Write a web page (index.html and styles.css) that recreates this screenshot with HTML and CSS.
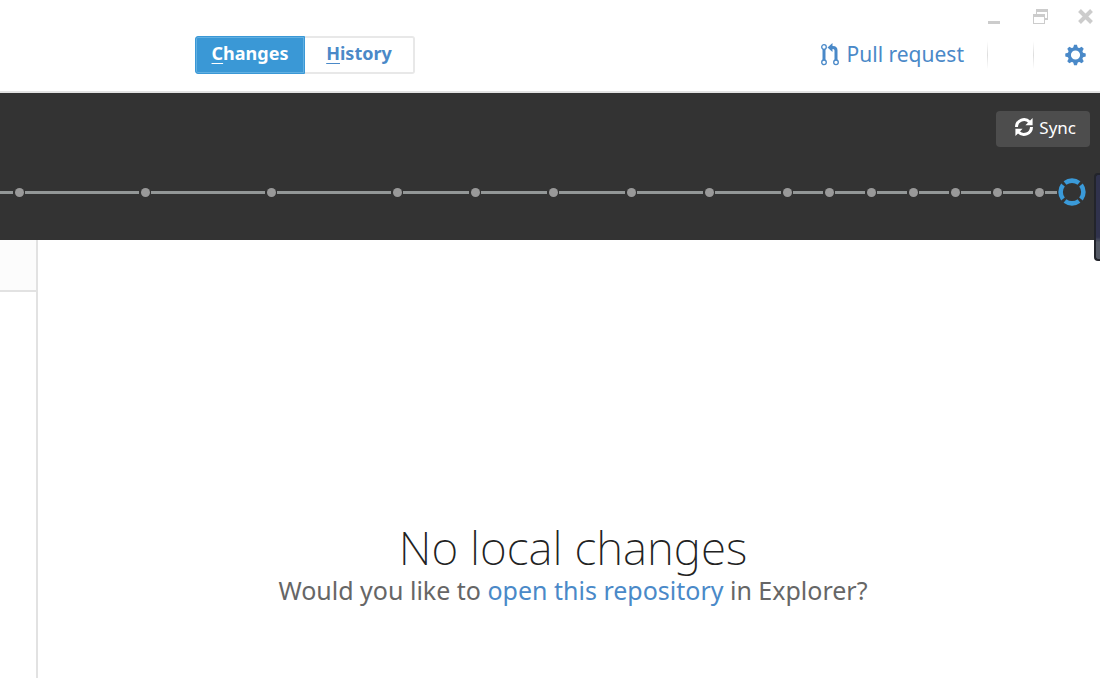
FILE: index.html
```html
<!DOCTYPE html>
<html lang="en">
<head>
    <meta charset="UTF-8">
    <meta name="viewport" content="width=device-width, initial-scale=1.0">
    <title>Changes</title>
    <link rel="stylesheet" href="styles.css">
</head>
<body>
    <header class="header">
        <div class="window-controls">
            <button class="window-button" aria-label="Minimize">
                <svg width="15" height="15" viewBox="0 0 15 15"><path d="M0 12h12v3H0z" fill="#ccc"/></svg>
            </button>
            <button class="window-button" aria-label="Restore">
                <svg width="15" height="15" viewBox="0 0 15 15" fill="#ccc"><path d="M3 0h12v11h-3V9h2V3H4v2H3zM0 5h12v10H0zM1 8v6h10V8z" fill-rule="evenodd"/></svg>
            </button>
            <button class="window-button" aria-label="Close">
                <svg width="15" height="15" viewBox="0 0 15 15"><path d="M1.5 1.5l12 12M13.5 1.5l-12 12" stroke="#ccc" stroke-width="4"/></svg>
            </button>
        </div>
        <div class="toolbar">
            <nav class="tabs">
                <button class="tab active"><span class="key">C</span>hanges</button>
                <button class="tab"><span class="key">H</span>istory</button>
            </nav>
            <a class="pull-request" href="#">
                <svg width="18" height="23" viewBox="0 0 18 23" fill="none" stroke="#4a89c8">
                    <path d="M3 6v11" stroke-width="3"/>
                    <path d="M10 4.5h2q3 0 3 3V17" stroke-width="3"/>
                    <path d="M6.5 4.5L11.5 0v9z" fill="#4a89c8" stroke="none"/>
                    <circle cx="3" cy="4" r="2.3" stroke-width="1.3" fill="#fff"/>
                    <circle cx="3" cy="19.3" r="2.3" stroke-width="1.3" fill="#fff"/>
                    <circle cx="15" cy="19.3" r="2.3" stroke-width="1.3" fill="#fff"/>
                </svg>
                Pull request
            </a>
            <span class="divider"></span>
            <span class="divider wide"></span>
            <button class="settings" aria-label="Settings">
                <svg width="21" height="22" viewBox="-11 -11 22 22" fill="#4a89c8">
                    <circle r="6.5" fill="none" stroke="#4a89c8" stroke-width="3.4"/>
                    <g id="teeth">
                        <path d="M-2.6-7L-1.5-10.7h3L2.6-7zM-2.6 7L-1.5 10.7h3L2.6 7zM-7-2.6L-10.7-1.5v3L-7 2.6zM7-2.6L10.7-1.5v3L7 2.6z"/>
                    </g>
                    <use href="#teeth" transform="rotate(45)"/>
                </svg>
            </button>
        </div>
    </header>

    <section class="timeline">
        <button class="sync">
            <svg width="20" height="20" viewBox="0 0 20 20" fill="none" stroke="#fff" stroke-width="3">
                <path d="M2.5 10a7.5 7.5 0 0 1 13-5"/>
                <path d="M17.5 10a7.5 7.5 0 0 1-13 5"/>
                <path d="M18.6 1v7.2h-7.2zM1.4 19v-7.2h7.2z" fill="#fff" stroke="none"/>
            </svg>
            Sync
        </button>
        <ol class="commits">
            <li class="commit first"></li>
            <li class="commit long"></li>
            <li class="commit long"></li>
            <li class="commit long"></li>
            <li class="commit medium"></li>
            <li class="commit medium"></li>
            <li class="commit medium"></li>
            <li class="commit medium"></li>
            <li class="commit medium"></li>
            <li class="commit"></li>
            <li class="commit"></li>
            <li class="commit"></li>
            <li class="commit"></li>
            <li class="commit"></li>
            <li class="commit"></li>
            <li class="current">
                <svg width="28" height="28" viewBox="-14 -14 28 28" fill="none" stroke="#3a9ad9" stroke-width="4.6">
                    <path id="arc" d="M-7-9A11.4 11.4 0 0 1 7-9"/>
                    <use href="#arc" transform="rotate(90)"/>
                    <use href="#arc" transform="rotate(180)"/>
                    <use href="#arc" transform="rotate(270)"/>
                </svg>
            </li>
        </ol>
        <div class="edge-panel"></div>
    </section>

    <div class="workspace">
        <aside class="sidebar">
            <div class="sidebar-header"></div>
        </aside>
        <main class="empty">
            <h1>No local changes</h1>
            <p>Would you like to <a href="#">open this repository</a> in Explorer?</p>
        </main>
    </div>
</body>
</html>
```
FILE: styles.css
```css
* {
    box-sizing: border-box;
}

body {
    font-family: "Noto Sans", "Open Sans", sans-serif;
    margin: 0;
    min-height: 100vh;
    display: flex;
    flex-direction: column;
    background-color: #fff;
    overflow-x: hidden;
}

button {
    font-family: inherit;
    border: none;
    padding: 0;
    background: none;
    cursor: pointer;
}

a {
    color: #4a89c8;
    text-decoration: none;
}

svg {
    display: block;
    flex-shrink: 0;
}

/* header */
.header {
    border-bottom: 2px solid #e2e2e2;
    padding-bottom: 17px;
}

.window-controls {
    display: flex;
    justify-content: flex-end;
    gap: 30px;
    height: 36px;
    padding: 9px 7px 0 0;
}

.window-button {
    height: 15px;
}

.toolbar {
    display: flex;
    align-items: center;
    padding: 0 14px 0 195px;
}

.tabs {
    display: flex;
    margin-right: auto;
}

.tab {
    width: 110px;
    height: 38px;
    padding-bottom: 4px;
    border: 2px solid #e8e8e8;
    border-left: none;
    border-radius: 0 3px 3px 0;
    font-size: 18px;
    line-height: 24px;
    font-weight: 700;
    color: #4a89c8;
}

.tab.active {
    border: 1px solid #3a98d6;
    border-radius: 3px 0 0 3px;
    background-color: #3a98d6;
    box-shadow: inset 0 0 0 1px #62b0e2;
    color: #fff;
}

.key {
    text-decoration: underline;
    text-decoration-thickness: 1px;
    text-underline-offset: 3px;
}

.pull-request {
    display: flex;
    align-items: center;
    gap: 8px;
    padding-bottom: 2px;
    font-size: 21px;
    line-height: 30px;
}

.divider {
    width: 1px;
    height: 28px;
    margin-left: 23px;
    background: linear-gradient(#fff, #ddd, #fff);
}

.divider.wide {
    margin: 0 31px 0 45px;
}

/* timeline */
.timeline {
    position: relative;
    display: flex;
    flex-direction: column;
    gap: 31px;
    padding: 18px 0 34px;
    background-color: #333;
}

.sync {
    display: flex;
    align-items: center;
    align-self: flex-end;
    gap: 5px;
    height: 36px;
    margin-right: 10px;
    padding: 0 14px 4px 18px;
    border-radius: 4px;
    background-color: #4d4d4d;
    font-size: 17px;
    color: #fff;
}

.commits {
    display: flex;
    align-items: center;
    list-style: none;
    margin: 0;
    padding: 0 14px 0 0;
}

.commit {
    display: flex;
    align-items: center;
    gap: 2px;
    width: 42px;
    padding-right: 1px;
}

.commit.medium {
    width: 78px;
}

.commit.long {
    width: 126px;
}

.commit.first {
    flex: 1;
}

.commit::before,
.current::before {
    content: "";
    flex: 1;
    height: 3px;
    background-color: #939797;
}

.commit::after {
    content: "";
    width: 9px;
    height: 9px;
    border-radius: 50%;
    background-color: #999;
}

.current {
    display: flex;
    align-items: center;
    gap: 1px;
    width: 41px;
}

.edge-panel {
    position: absolute;
    top: 80px;
    right: 0;
    width: 6px;
    height: 88px;
    border: 2px solid #22242b;
    border-right: none;
    border-radius: 4px 0 0 4px;
    background: linear-gradient(#30324c 74%, #555a66 80%);
}

/* workspace */
.workspace {
    flex: 1;
    display: flex;
}

.sidebar {
    width: 38px;
    border-right: 2px solid #e2e2e2;
}

.sidebar-header {
    height: 52px;
    border-bottom: 2px solid #e2e2e2;
    background-color: #fcfcfc;
}

.empty {
    flex: 1;
    display: flex;
    flex-direction: column;
    align-items: center;
    justify-content: flex-end;
    padding: 0 0 71px 8px;
}

.empty h1 {
    margin: 0;
    font-size: 46px;
    line-height: 52px;
    font-weight: 200;
    color: #222;
}

.empty p {
    margin: 0;
    font-size: 25px;
    line-height: 34px;
    color: #666;
}
```
